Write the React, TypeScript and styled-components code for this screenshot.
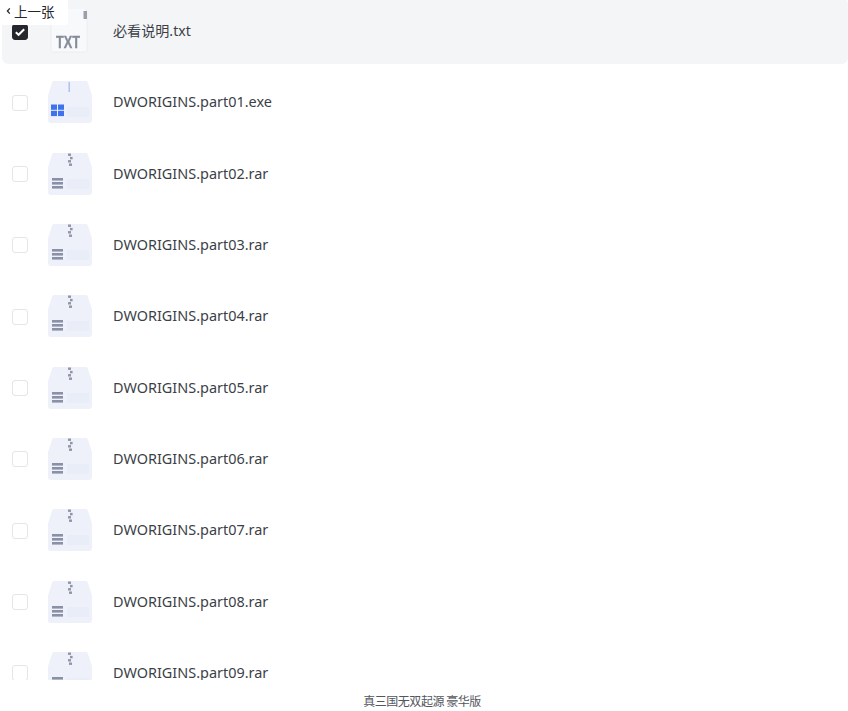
import React from "react";
import styled, { createGlobalStyle } from "styled-components";

const Global = createGlobalStyle`
  html, body { margin: 0; padding: 0; background: #fff; }
  body { font-family: "Noto Sans", "Noto Sans CJK SC", sans-serif; }
`;

const Page = styled.div`
  position: relative;
  width: 848px;
  height: 711px;
  overflow: hidden;
  background: #fff;
`;

const BackButton = styled.div`
  position: absolute;
  top: 0;
  left: 0;
  z-index: 2;
  width: 68px;
  height: 25px;
  display: flex;
  align-items: center;
  padding: 0 0 4px 6px;
  gap: 3px;
  box-sizing: border-box;
  background: #fff;
  border-bottom-right-radius: 3px;
  color: #25272c;
  font-size: 13.5px;
  line-height: 18px;
  font-family: "Noto Sans CJK SC", sans-serif;
`;

const ListViewport = styled.div`
  height: 680px;
  overflow: hidden;
`;

const List = styled.div`
  margin-top: -2px;
  padding-left: 2px;
  display: flex;
  flex-direction: column;
  gap: 5.33px;
`;

const Row = styled.div<{ $selected?: boolean }>`
  flex: none;
  height: 66px;
  display: flex;
  align-items: center;
  padding-left: 10px;
  border-radius: 6px;
  background: ${(p) => (p.$selected ? "#f3f5f7" : "transparent")};
`;

const Check = styled.div<{ $checked?: boolean }>`
  flex: none;
  width: 16px;
  height: 16px;
  margin-top: 1px;
  box-sizing: border-box;
  border-radius: 3px;
  display: flex;
  align-items: center;
  justify-content: center;
  border: 1px solid ${(p) => (p.$checked ? "#25272d" : "#e3e5e8")};
  background: ${(p) => (p.$checked ? "#25272d" : "#fff")};
`;

const IconSlot = styled.div`
  flex: none;
  width: 46px;
  height: 46px;
  margin: 2px 0 0 19px;
  display: flex;
  align-items: center;
  justify-content: center;
  filter: blur(0.35px);
`;

const FileName = styled.span<{ $cjk?: boolean }>`
  margin-left: 20px;
  font-size: ${(p) => (p.$cjk ? "14.1px" : "14.45px")};
  line-height: 20px;
  color: #3c3f47;
  white-space: nowrap;
`;

const Caption = styled.div`
  height: 31px;
  padding: 10px 4px 0 0;
  box-sizing: border-box;
  display: flex;
  align-items: center;
  justify-content: center;
  font-size: 12px;
  color: #53565e;
  font-family: "Noto Sans CJK SC", sans-serif;
  letter-spacing: -0.45px;
`;

const Chevron = () => (
  <svg width="5" height="8" viewBox="0 0 5 8">
    <path d="M3.8 1.4 1.4 4l2.4 2.6" fill="none" stroke="#25272c" strokeWidth="1.3" />
  </svg>
);

const Tick = () => (
  <svg width="12" height="10" viewBox="0 0 12 10">
    <path d="M1.8 5.2 4.6 7.8l5.6-5.6" fill="none" stroke="#fff" strokeWidth="2" />
  </svg>
);

const TxtIcon = () => (
  <svg width="46" height="46" viewBox="0 0 46 46">
    <path d="M5 -1h32l3 3v40a1 1 0 0 1-1 1H5a1 1 0 0 1-1-1V0a1 1 0 0 1 1-1Z" fill="#f8f9fb" stroke="#e8ebef" strokeWidth="0.7" />
    <rect x="36.5" y="2" width="3.5" height="8" fill="#9aa0ab" />
    <text x="9" y="39" fontFamily="'Liberation Sans', sans-serif" fontWeight="700" fontSize="17" fill="#868c99" stroke="#868c99" strokeWidth="0.4" textLength="24" lengthAdjust="spacingAndGlyphs">TXT</text>
  </svg>
);

const BoxBase = () => (
  <>
    <path d="M7 1h31.5c1.3 0 2 .6 2.5 2L44.6 14a3 3 0 0 1 .4 2v24a3 3 0 0 1-3 3H4a3 3 0 0 1-3-3V16a3 3 0 0 1 .4-2L5 3c.4-1.4 1-2 2-2Z" fill="#eef1fa" />
    <rect x="20" y="27" width="22" height="10" rx="1" fill="#e7ebf5" opacity="0.75" />
  </>
);

const ExeIcon = () => (
  <svg width="46" height="46" viewBox="0 0 46 46">
    <BoxBase />
    <rect x="21.5" y="2" width="1.4" height="10" fill="#a9c0ea" />
    <g fill="#3f73ee">
      <rect x="4" y="24.5" width="6" height="5.3" />
      <rect x="11" y="24.5" width="6" height="5.3" />
      <rect x="4" y="30.8" width="6" height="5.3" />
      <rect x="11" y="30.8" width="6" height="5.3" />
    </g>
  </svg>
);

const RarIcon = () => (
  <svg width="46" height="46" viewBox="0 0 46 46">
    <BoxBase />
    <g fill="#8f96a8">
      <rect x="21" y="1.5" width="3" height="2.4" />
      <rect x="23" y="4.9" width="2.6" height="2.4" />
      <rect x="21" y="8.1" width="3" height="2.4" />
      <rect x="22" y="11.5" width="3" height="2.4" />
    </g>
    <g fill="#8a91a6">
      <rect x="5" y="26" width="11" height="2.6" />
      <rect x="5" y="30" width="11" height="2.6" />
      <rect x="5" y="34" width="11" height="2.6" />
    </g>
  </svg>
);

const files = Array.from({ length: 9 }, (_, i) => {
  const n = String(i + 1).padStart(2, "0");
  return `DWORIGINS.part${n}.${i === 0 ? "exe" : "rar"}`;
});

export default function App() {
  return (
    <Page>
      <Global />
      <BackButton>
        <Chevron />
        上一张
      </BackButton>
      <ListViewport>
        <List>
          <Row $selected>
            <Check $checked>
              <Tick />
            </Check>
            <IconSlot>
              <TxtIcon />
            </IconSlot>
            <FileName $cjk>必看说明.txt</FileName>
          </Row>
          {files.map((name, i) => (
            <Row key={name}>
              <Check />
              <IconSlot>{i === 0 ? <ExeIcon /> : <RarIcon />}</IconSlot>
              <FileName>{name}</FileName>
            </Row>
          ))}
        </List>
      </ListViewport>
      <Caption>真三国无双起源 豪华版</Caption>
    </Page>
  );
}
